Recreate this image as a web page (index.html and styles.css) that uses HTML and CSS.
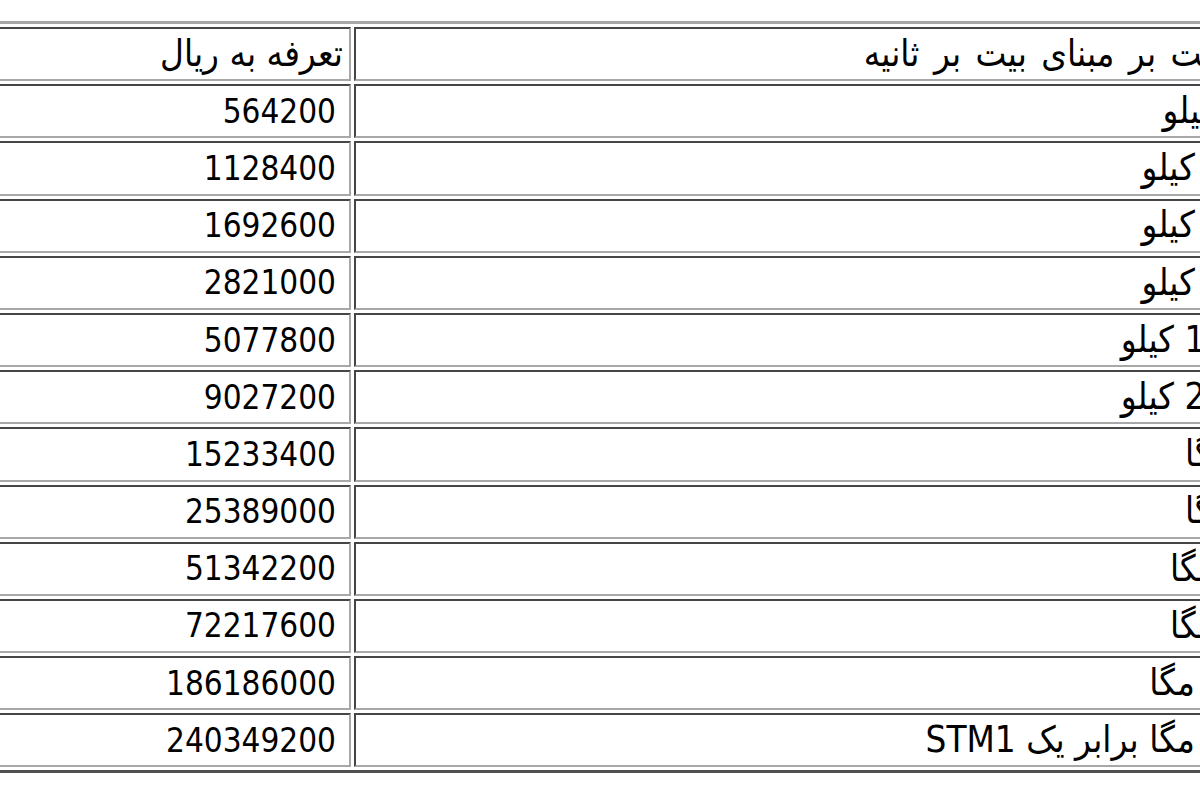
FILE: index.html
```html
<!DOCTYPE html>
<html lang="fa">
<head>
<meta charset="utf-8">
<title>تعرفه</title>
<link rel="stylesheet" href="styles.css">
</head>
<body>
<div class="viewport">
<table class="tariff" dir="rtl">
<colgroup><col class="c-speed"><col class="c-price"></colgroup>
<tr><td class="speed heading">سرعت بر مبنای بیت بر ثانیه</td><td class="price label">تعرفه به ریال</td></tr>
<tr><td class="speed">64 کیلو</td><td class="price num">564200</td></tr>
<tr><td class="speed">128 کیلو</td><td class="price num">1128400</td></tr>
<tr><td class="speed">192 کیلو</td><td class="price num">1692600</td></tr>
<tr><td class="speed">512 کیلو</td><td class="price num">2821000</td></tr>
<tr><td class="speed">1024 کیلو</td><td class="price num">5077800</td></tr>
<tr><td class="speed">2048 کیلو</td><td class="price num">9027200</td></tr>
<tr><td class="speed short">4 مگا</td><td class="price num">15233400</td></tr>
<tr><td class="speed short">8 مگا</td><td class="price num">25389000</td></tr>
<tr><td class="speed">16 مگا</td><td class="price num">51342200</td></tr>
<tr><td class="speed">34 مگا</td><td class="price num">72217600</td></tr>
<tr><td class="speed">100 مگا</td><td class="price num">186186000</td></tr>
<tr><td class="speed">155 مگا برابر یک STM1</td><td class="price num">240349200</td></tr>
</table>
</div>
</body>
</html>
```

FILE: styles.css
```css
html, body {
  margin: 0;
  padding: 0;
  background: #ffffff;
}
.viewport {
  width: 1200px;
  height: 800px;
  overflow: hidden;
  direction: ltr;
}
.tariff {
  table-layout: fixed;
  width: 1382px;
  margin: 21px 0 0 -100px;
  border-collapse: separate;
  border-spacing: 3px;
  border-style: solid;
  border-width: 3px;
  border-color: #a8a8a8 #505050 #505050 #a8a8a8;
  font-family: "DejaVu Sans Condensed", "DejaVu Sans", sans-serif;
  font-size: 33px;
  color: #000000;
}
.c-price { width: 445px; }
.c-speed { width: 922px; }
.tariff td {
  box-sizing: border-box;
  height: 54.2px;
  padding: 0 6px;
  border-style: solid;
  border-width: 2px;
  border-color: #454545 #a8a8a8 #a8a8a8 #454545;
  text-align: right;
  vertical-align: middle;
  white-space: nowrap;
  line-height: 1;
}
.tariff td.speed,
.tariff td.label {
  font-size: 36.5px;
}
.tariff td.heading {
  word-spacing: 4px;
}
.tariff td.short {
  word-spacing: 6px;
}
.tariff td.num {
  padding-right: 13px;
}
```
